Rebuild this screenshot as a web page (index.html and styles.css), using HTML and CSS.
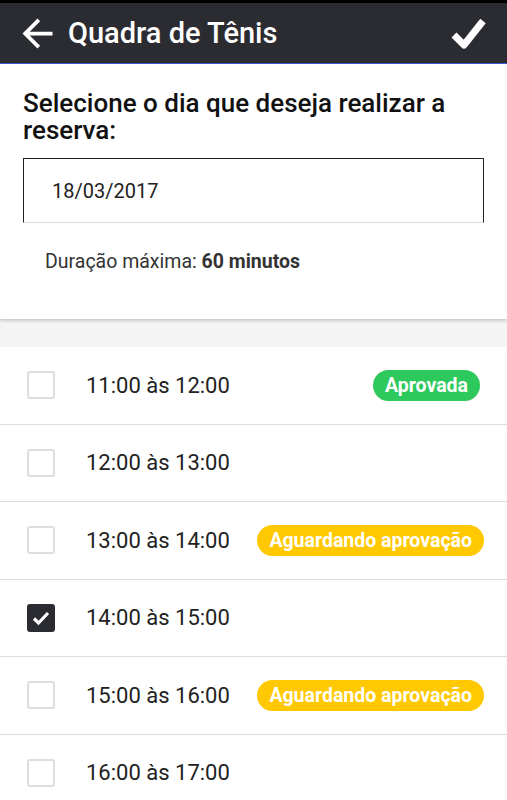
FILE: index.html
```html
<!DOCTYPE html>
<html lang="pt-BR">
<head>
    <meta charset="UTF-8">
    <meta name="viewport" content="width=device-width, initial-scale=1.0">
    <title>Quadra de Tênis</title>
    <link rel="stylesheet" href="styles.css">
</head>
<body>

<div class="statusbar"></div>
<header class="toolbar">
    <button class="icon-btn back" type="button" aria-label="Voltar">
        <svg width="45" height="45" viewBox="0 0 24 24"><path fill="#fff" d="M20 11H7.83l5.59-5.59L12 4l-8 8 8 8 1.41-1.41L7.83 13H20v-2z"/></svg>
    </button>
    <h1 class="title">Quadra de Tênis</h1>
    <button class="icon-btn confirm" type="button" aria-label="Confirmar">
        <svg width="40" height="36" viewBox="0 0 40 36"><polyline points="5,20 15,30 34,6" fill="none" stroke="#fff" stroke-width="7" stroke-linejoin="round"/></svg>
    </button>
</header>

<section class="card">
    <h2 class="question">Selecione o dia que deseja realizar a reserva:</h2>
    <div class="date-field">18/03/2017</div>
    <p class="duration">Duração máxima: <b>60 minutos</b></p>
</section>

<ul class="slots">
    <li class="slot">
        <span class="check"></span>
        <span class="time">11:00 às 12:00</span>
        <span class="badge approved">Aprovada</span>
    </li>
    <li class="slot">
        <span class="check"></span>
        <span class="time">12:00 às 13:00</span>
    </li>
    <li class="slot">
        <span class="check"></span>
        <span class="time">13:00 às 14:00</span>
        <span class="badge pending">Aguardando aprovação</span>
    </li>
    <li class="slot">
        <span class="check checked">
            <svg width="22" height="22" viewBox="0 0 22 22"><polyline points="4,11.5 8.5,16 18,6" fill="none" stroke="#fff" stroke-width="3.2"/></svg>
        </span>
        <span class="time">14:00 às 15:00</span>
    </li>
    <li class="slot">
        <span class="check"></span>
        <span class="time">15:00 às 16:00</span>
        <span class="badge pending">Aguardando aprovação</span>
    </li>
    <li class="slot">
        <span class="check"></span>
        <span class="time">16:00 às 17:00</span>
    </li>
</ul>

</body>
</html>
```

FILE: styles.css
```css
body {
    margin: 0;
    font-family: Roboto, "Liberation Sans", sans-serif;
    background: #f4f4f4;
    overflow: hidden;
}
.statusbar {
    height: 3px;
    background: #000;
}
.toolbar {
    height: 60px;
    background: #2b2c31;
    border-bottom: 1px solid #3d5ad6;
    display: flex;
    align-items: center;
    padding: 0 18px 0 15px;
}
.icon-btn {
    background: none;
    border: none;
    padding: 0;
    display: flex;
    cursor: pointer;
}
.title {
    flex: 1;
    margin: 0 0 0 8px;
    color: #fff;
    font-size: 29px;
    font-weight: 500;
}
.card {
    background: #fff;
    padding: 26px 23px 46px;
    box-shadow: 0 2px 3px rgba(0, 0, 0, 0.18);
    margin-bottom: 28px;
}
.question {
    margin: 0 0 14px;
    font-size: 26px;
    font-weight: 500;
    line-height: 27px;
    color: #111;
}
.date-field {
    height: 63px;
    border: 1px solid #222;
    border-bottom-color: #ddd;
    padding-left: 28px;
    display: flex;
    align-items: center;
    font-size: 20px;
    color: #222;
}
.duration {
    margin: 27px 0 0 22px;
    font-size: 19.5px;
    line-height: 23px;
    color: #333;
}
.duration b {
    font-weight: 700;
}
.slots {
    list-style: none;
    margin: 0;
    padding: 0;
    background: #fff;
}
.slot {
    height: 76.5px;
    border-bottom: 1px solid #dcdcdc;
    display: flex;
    align-items: center;
    padding: 0 23px 0 27px;
}
.check {
    width: 24px;
    height: 24px;
    border: 2px solid #dedede;
    border-radius: 3px;
    display: flex;
    align-items: center;
    justify-content: center;
}
.check.checked {
    background: #2b2c31;
    border-color: #2b2c31;
}
.time {
    flex: 1;
    margin-left: 31px;
    font-size: 22px;
    color: #222;
}
.badge {
    color: #fff;
    font-size: 19.5px;
    font-weight: 700;
    line-height: 23px;
    padding: 4px 12px;
    border-radius: 16px;
}
.approved {
    background: #2ec95c;
    margin-right: 4px;
}
.pending {
    background: #ffc800;
}
```
